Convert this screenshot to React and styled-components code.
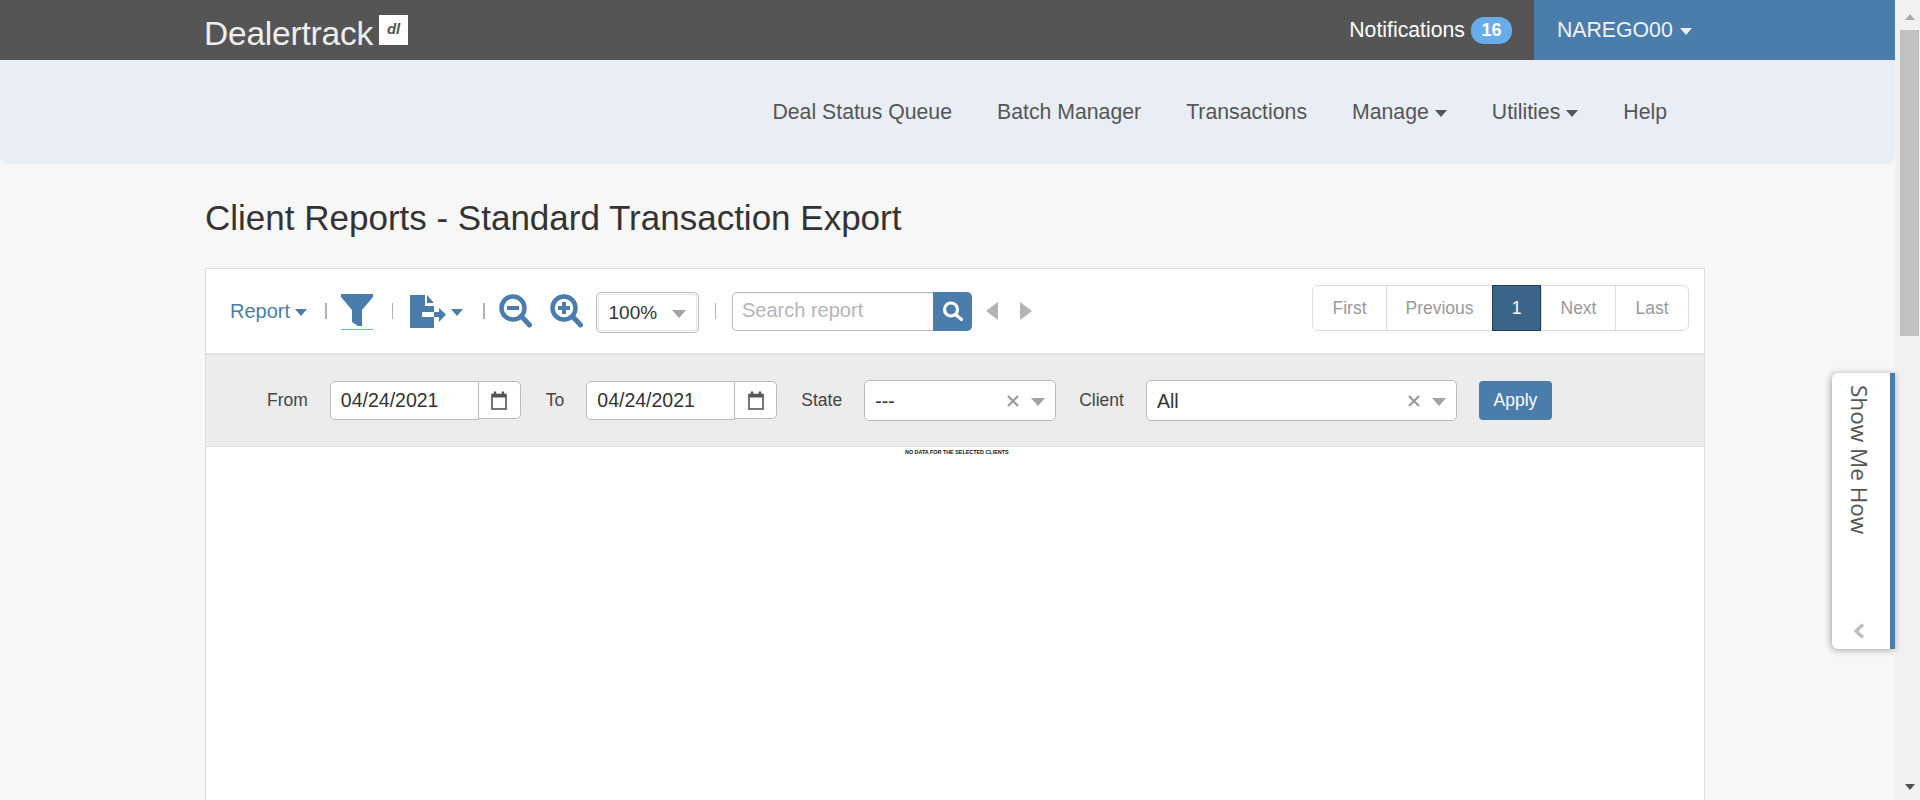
import React from 'react';
import styled, { createGlobalStyle } from 'styled-components';

const GlobalStyle = createGlobalStyle`
	html, body {
		margin: 0;
		height: 100%;
		overflow: hidden;
		background: #f7f7f7;
		font-family: "Liberation Sans", Arial, sans-serif;
		color: #333;
	}
`;

const BLUE = '#4a7dab';

const Shell = styled.div`
	display: flex;
	height: 800px;
	position: relative;
	overflow: hidden;
`;

const Page = styled.div`
	flex: 1;
	min-width: 0;
	display: flex;
	flex-direction: column;
`;

const TopBar = styled.header`
	display: flex;
	align-items: stretch;
	height: 60px;
	background: #555;
	color: #fff;
`;

const Logo = styled.div`
	display: flex;
	align-items: flex-start;
	margin-left: 204px;
	margin-right: auto;
`;

const LogoText = styled.span`
	font-size: 33.5px;
	line-height: 33px;
	margin-top: 17px;
	color: #eee;
	letter-spacing: -0.2px;
`;

const LogoMark = styled.span`
	width: 29px;
	height: 30px;
	margin: 15px 0 0 6px;
	background: #fff;
	color: #555;
	font-size: 15px;
	font-weight: bold;
	font-style: italic;
	line-height: 28px;
	text-align: center;
`;

const Notifications = styled.div`
	display: flex;
	align-items: center;
	gap: 6px;
	margin-right: 22px;
	font-size: 21.25px;
`;

const Badge = styled.span`
	width: 41px;
	height: 27px;
	border-radius: 13px;
	background: #68ade9;
	color: #fff;
	font-size: 18px;
	font-weight: bold;
	line-height: 27px;
	text-align: center;
`;

const UserMenu = styled.div`
	display: flex;
	align-items: center;
	gap: 7px;
	width: 338px;
	padding-left: 23px;
	background: ${BLUE};
	font-size: 21.25px;
	color: #f2f2f2;
`;

const Caret = styled.span`
	display: inline-block;
	flex: none;
	width: 0;
	height: 0;
	border-left: ${(p) => p.$size || 6}px solid transparent;
	border-right: ${(p) => p.$size || 6}px solid transparent;
	border-top: ${(p) => (p.$size || 6) + 1}px solid ${(p) => p.$color || '#555'};
	margin-top: 3px;
`;

const NavBar = styled.nav`
	display: flex;
	align-items: center;
	justify-content: flex-end;
	gap: 45px;
	height: 104px;
	padding-right: 228px;
	background: #e9eef6;
	border-radius: 0 0 7px 7px;
	font-size: 21.25px;
	color: #555;
`;

const NavItem = styled.span`
	display: flex;
	align-items: center;
	gap: 6px;
`;

const Content = styled.main`
	flex: 1;
	min-height: 0;
	display: flex;
	flex-direction: column;
	width: 1500px;
	margin-left: 205px;
`;

const Title = styled.h1`
	margin: 32px 0 0;
	font-size: 35px;
	line-height: 44px;
	height: 72px;
	font-weight: normal;
	color: #333;
`;

const Panel = styled.section`
	flex: 1;
	display: flex;
	flex-direction: column;
	background: #fff;
	border: 1px solid #ddd;
	border-bottom: 0;
`;

const Toolbar = styled.div`
	display: flex;
	align-items: center;
	flex: none;
	height: 84px;
	padding: 0 15px 0 24px;
	border-bottom: 2px solid #e0e0e0;
`;

const ReportMenu = styled.span`
	display: flex;
	align-items: center;
	gap: 5px;
	font-size: 20px;
	color: ${BLUE};
`;

const Divider = styled.span`
	flex: none;
	width: 1.5px;
	height: 16px;
	margin: 0 ${(p) => p.$right ?? 16}px 0 ${(p) => p.$left ?? 16}px;
	background: #a9b4bf;
`;

const IconWrap = styled.span`
	display: flex;
	flex: none;
	align-items: center;
	margin-right: ${(p) => p.$right || 0}px;
`;

const FilterToggle = styled.span`
	display: block;
	flex: none;
	width: 32px;
	height: 35px;
	margin-top: 2px;
	border-bottom: 1px solid #6aaee8;
`;

const ZoomSelect = styled.div`
	display: flex;
	flex: none;
	align-items: center;
	justify-content: space-between;
	box-sizing: border-box;
	width: 103px;
	height: 41px;
	margin-top: 3px;
	padding: 0 12px;
	background: #fff;
	border: 1px solid #bbb;
	border-radius: 5px;
	box-shadow: inset 0 0 0 1px #fff, inset 0 0 0 2px #e4e4e4;
	font-size: 19px;
`;

const SearchBox = styled.div`
	display: flex;
	flex: none;
	height: 39px;
	width: 240px;
`;

const SearchInput = styled.div`
	flex: 1;
	box-sizing: border-box;
	padding-left: 9px;
	border: 1px solid #bbb;
	border-right: 0;
	border-radius: 5px 0 0 5px;
	box-shadow: inset 0 1px 1px rgba(0, 0, 0, 0.07);
	color: #b5b5b5;
	font-size: 20px;
	line-height: 35px;
`;

const SearchButton = styled.span`
	display: flex;
	align-items: center;
	justify-content: center;
	width: 39px;
	background: ${BLUE};
	border-radius: 0 5px 5px 0;
`;

const PagerArrow = styled.span`
	flex: none;
	width: 0;
	height: 0;
	margin-left: ${(p) => p.$left}px;
	border-top: 9px solid transparent;
	border-bottom: 9px solid transparent;
	border-${(p) => (p.$dir === 'left' ? 'right' : 'left')}: 12px solid #b3b3b3;
`;

const Pagination = styled.div`
	display: flex;
	flex: none;
	height: 46px;
	margin: -6px 0 0 auto;
	box-sizing: border-box;
	border: 1px solid #ddd;
	border-radius: 6px;
	font-size: 17.5px;
	color: #999;
`;

const PageLink = styled.span`
	display: flex;
	align-items: center;
	justify-content: center;
	box-sizing: border-box;
	width: ${(p) => p.$width}px;
	border-left: 1px solid #ddd;
	&:first-child {
		border-left: 0;
	}
`;

const ActivePage = styled(PageLink)`
	margin: -1px 0;
	background: #3a6588;
	border: 1px solid #20405f;
	color: #fff;
`;

const FilterBar = styled.div`
	display: flex;
	align-items: center;
	flex: none;
	height: 91px;
	padding-left: 61px;
	background: #ececec;
	border-bottom: 1px solid #ddd;
	font-size: 17.5px;
`;

const FilterLabel = styled.span`
	flex: none;
	color: #444;
	margin-right: ${(p) => p.$right}px;
`;

const DateGroup = styled.div`
	display: flex;
	flex: none;
	width: ${(p) => p.$width || 191}px;
	height: 39px;
	margin-right: ${(p) => p.$right}px;
`;

const DateInput = styled.div`
	flex: 1;
	box-sizing: border-box;
	height: 39px;
	padding-left: 10px;
	background: #fff;
	border: 1px solid #bbb;
	border-radius: 5px 0 0 5px;
	font-size: 19.5px;
	line-height: 36px;
`;

const CalendarButton = styled.span`
	display: flex;
	align-items: center;
	justify-content: center;
	box-sizing: border-box;
	width: 42px;
	height: 38px;
	background: #fff;
	border: 1px solid #bbb;
	border-left: 0;
	border-radius: 0 5px 5px 0;
`;

const SelectBox = styled.div`
	display: flex;
	flex: none;
	align-items: center;
	box-sizing: border-box;
	width: ${(p) => p.$width}px;
	height: 41px;
	margin-right: ${(p) => p.$right}px;
	padding: 0 10px 0 10px;
	background: #fff;
	border: 1px solid #bbb;
	border-radius: 5px;
	font-size: 19.5px;
`;

const SelectValue = styled.span`
	flex: 1;
	margin-top: 2px;
`;

const ApplyButton = styled.span`
	flex: none;
	box-sizing: border-box;
	width: 73px;
	height: 39px;
	margin-top: -1px;
	background: ${BLUE};
	border-radius: 4px;
	color: #fff;
	font-size: 17.5px;
	line-height: 38px;
	text-align: center;
`;

const ReportBody = styled.div`
	flex: 1;
	padding-top: 2px;
	padding-left: 699px;
`;

const EmptyNote = styled.div`
	font-size: 5.4px;
	line-height: 7px;
	font-weight: bold;
	color: #111;
	white-space: nowrap;
`;

const ScrollTrack = styled.aside`
	flex: none;
	display: flex;
	flex-direction: column;
	align-items: center;
	width: 25px;
	background: #f1f1f1;
`;

const ScrollButton = styled.span`
	display: flex;
	align-items: center;
	justify-content: center;
	height: 30px;
	width: 100%;
	margin-left: 4px;
`;

const ScrollThumb = styled.span`
	display: block;
	width: 19px;
	height: 306px;
	margin-left: 4px;
	margin-bottom: auto;
	background: #c1c1c1;
`;

const HelpTab = styled.div`
	position: absolute;
	top: 373px;
	left: 1832px;
	display: flex;
	flex-direction: column;
	align-items: center;
	box-sizing: border-box;
	width: 63px;
	height: 276px;
	padding-right: 4px;
	background: #fff;
	border-right: 5px solid ${BLUE};
	border-radius: 6px 0 0 6px;
	box-shadow: -1px 1px 7px rgba(0, 0, 0, 0.35);
`;

const HelpLabel = styled.span`
	writing-mode: vertical-rl;
	margin-top: 12px;
	font-family: "Open Sans", "DejaVu Sans", sans-serif;
	font-size: 22.5px;
	color: #555;
	white-space: nowrap;
`;

const HelpChevron = styled.span`
	display: flex;
	margin-top: auto;
	margin-bottom: 10px;
`;

const Funnel = () => (
	<svg width="32" height="32" viewBox="0 0 32 32" style={{ display: 'block' }}>
		<path d="M0 0H32V3L21 16V32H17L11 28V16L0 3Z" fill={BLUE} />
	</svg>
);

const ExportDoc = () => (
	<svg width="36" height="33" viewBox="0 0 36 33">
		<path d="M0 0H15V11H24V17H12V22H24V33H0Z" fill={BLUE} />
		<path d="M17 0L24 8H17Z" fill={BLUE} />
		<path d="M24 17H29V13L36 19.5L29 27V22H24Z" fill={BLUE} />
	</svg>
);

const Magnifier = ({ plus }) => (
	<svg width="33" height="34" viewBox="0 0 33 34" fill="none">
		<circle cx="14" cy="14" r="11.5" stroke={BLUE} strokeWidth="4.5" />
		<path d="M23 23L30.5 31" stroke={BLUE} strokeWidth="5" strokeLinecap="round" />
		<path d="M8 14H20" stroke={BLUE} strokeWidth="4" />
		{plus && <path d="M14 8V20" stroke={BLUE} strokeWidth="4" />}
	</svg>
);

const SearchGlyph = () => (
	<svg width="22" height="20" viewBox="0 0 22 20" fill="none">
		<circle cx="9" cy="8.5" r="6.5" stroke="#fff" strokeWidth="3.2" />
		<path d="M13.5 13.5L19.5 18.5" stroke="#fff" strokeWidth="3.2" strokeLinecap="round" />
	</svg>
);

const CalendarGlyph = () => (
	<svg width="16" height="19" viewBox="0 0 16 19" fill="none">
		<rect x="1" y="3.5" width="14" height="14.5" stroke="#555" strokeWidth="1.6" />
		<path d="M1 3.5H15V6.5H1Z" fill="#555" />
		<path d="M4 0.5V4M12 0.5V4" stroke="#555" strokeWidth="2.4" />
	</svg>
);

const ClearGlyph = () => (
	<svg width="12" height="12" viewBox="0 0 12 12" fill="none">
		<path d="M1 1L11 11M11 1L1 11" stroke="#999" strokeWidth="2.2" />
	</svg>
);

const ChevronGlyph = () => (
	<svg width="12" height="16" viewBox="0 0 12 16" fill="none">
		<path d="M10 1.5L3 8L10 14.5" stroke="#c0c0c0" strokeWidth="3.4" />
	</svg>
);

const SelectArrow = () => <Caret $size={7.5} $color="#a3a3a3" />;

const App = () => (
	<Shell>
		<GlobalStyle />
		<Page>
			<TopBar>
				<Logo>
					<LogoText>Dealertrack</LogoText>
					<LogoMark>dl</LogoMark>
				</Logo>
				<Notifications>
					Notifications
					<Badge>16</Badge>
				</Notifications>
				<UserMenu>
					NAREGO00
					<Caret $color="#eee" />
				</UserMenu>
			</TopBar>
			<NavBar>
				<NavItem>Deal Status Queue</NavItem>
				<NavItem>Batch Manager</NavItem>
				<NavItem>Transactions</NavItem>
				<NavItem>Manage <Caret /></NavItem>
				<NavItem>Utilities <Caret /></NavItem>
				<NavItem>Help</NavItem>
			</NavBar>
			<Content>
				<Title>Client Reports - Standard Transaction Export</Title>
				<Panel>
					<Toolbar>
						<ReportMenu>
							Report
							<Caret $color={BLUE} />
						</ReportMenu>
						<Divider $left={18} $right={14} />
						<FilterToggle><Funnel /></FilterToggle>
						<Divider $left={19} $right={17} />
						<IconWrap $right={5}><ExportDoc /></IconWrap>
						<Caret $color={BLUE} />
						<Divider $left={20} $right={14} />
						<IconWrap $right={18}><Magnifier /></IconWrap>
						<IconWrap $right={13}><Magnifier plus /></IconWrap>
						<ZoomSelect>
							100%
							<SelectArrow />
						</ZoomSelect>
						<Divider />
						<SearchBox>
							<SearchInput>Search report</SearchInput>
							<SearchButton><SearchGlyph /></SearchButton>
						</SearchBox>
						<PagerArrow $dir="left" $left={14} />
						<PagerArrow $dir="right" $left={22} />
						<Pagination>
							<PageLink $width={73}>First</PageLink>
							<PageLink $width={106}>Previous</PageLink>
							<ActivePage $width={49}>1</ActivePage>
							<PageLink $width={74}>Next</PageLink>
							<PageLink $width={73}>Last</PageLink>
						</Pagination>
					</Toolbar>
					<FilterBar>
						<FilterLabel $right={22}>From</FilterLabel>
						<DateGroup $right={25}>
							<DateInput>04/24/2021</DateInput>
							<CalendarButton><CalendarGlyph /></CalendarButton>
						</DateGroup>
						<FilterLabel $right={22}>To</FilterLabel>
						<DateGroup $right={24}>
							<DateInput>04/24/2021</DateInput>
							<CalendarButton><CalendarGlyph /></CalendarButton>
						</DateGroup>
						<FilterLabel $right={22}>State</FilterLabel>
						<SelectBox $width={192} $right={23}>
							<SelectValue>---</SelectValue>
							<ClearGlyph />
							<IconWrap style={{ marginLeft: 12 }}><SelectArrow /></IconWrap>
						</SelectBox>
						<FilterLabel $right={22}>Client</FilterLabel>
						<SelectBox $width={311} $right={22}>
							<SelectValue>All</SelectValue>
							<ClearGlyph />
							<IconWrap style={{ marginLeft: 12 }}><SelectArrow /></IconWrap>
						</SelectBox>
						<ApplyButton>Apply</ApplyButton>
					</FilterBar>
					<ReportBody>
						<EmptyNote>NO DATA FOR THE SELECTED CLIENTS</EmptyNote>
					</ReportBody>
				</Panel>
			</Content>
		</Page>
		<ScrollTrack>
			<ScrollButton><Caret $size={5} $color="#a8a8a8" style={{ transform: 'rotate(180deg)' }} /></ScrollButton>
			<ScrollThumb />
			<ScrollButton><Caret $size={5} $color="#505050" /></ScrollButton>
		</ScrollTrack>
		<HelpTab>
			<HelpLabel>Show Me How</HelpLabel>
			<HelpChevron><ChevronGlyph /></HelpChevron>
		</HelpTab>
	</Shell>
);

export default App;
